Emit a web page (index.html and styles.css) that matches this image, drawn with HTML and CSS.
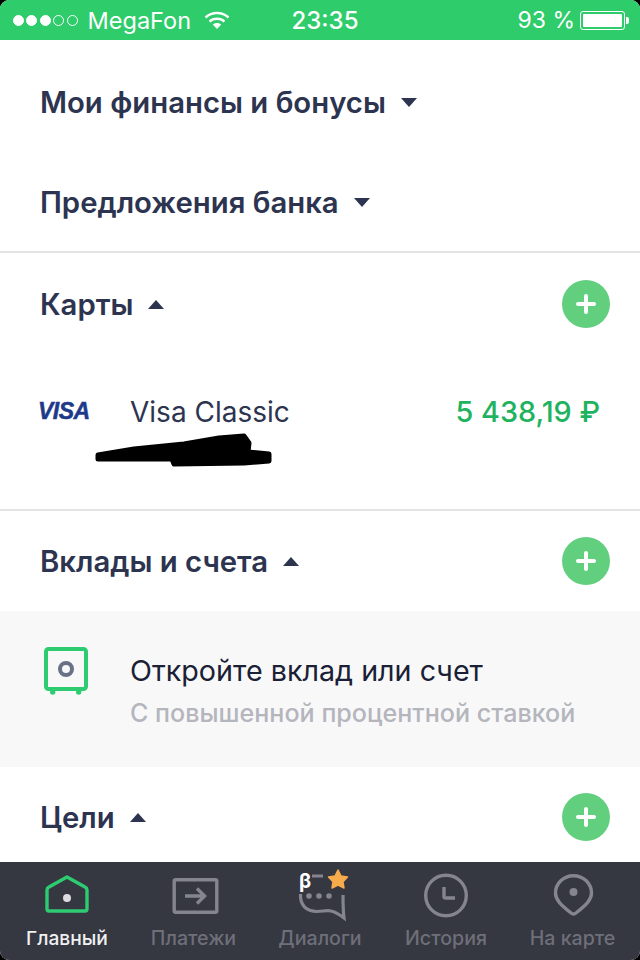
FILE: index.html
```html
<!DOCTYPE html>
<html>
<head>
<meta charset="utf-8">
<meta name="viewport" content="width=device-width, initial-scale=1">
<title>Главный</title>
<link rel="stylesheet" href="styles.css">
</head>
<body>
<div class="screen">

  <div class="statusbar">
    <div class="status-left">
      <span class="signal">
        <i class="dot on"></i><i class="dot on"></i><i class="dot on"></i><i class="dot"></i><i class="dot"></i>
      </span>
      <span class="carrier">MegaFon</span>
      <svg class="wifi" width="26" height="18" viewBox="0 0 26 18">
        <path d="M1.500 6.500C8 .5 18 .5 24.500 6.500" fill="none" stroke="#fff" stroke-width="2.400"/>
        <path d="M5.500 10.500C9.500 6.800 16.500 6.800 20.500 10.500" fill="none" stroke="#fff" stroke-width="2.400"/>
        <path d="M8.800 13.600C11 11.600 15 11.600 17.200 13.600L13 18Z" fill="#fff"/>
      </svg>
    </div>
    <div class="status-time">23:35</div>
    <div class="status-right">
      <span class="percent">93 %</span>
      <span class="battery"><span class="battery-fill"></span></span>
      <span class="battery-tip"></span>
    </div>
  </div>

  <div class="content">
    <div class="head-row first">
      <span class="title">Мои финансы и бонусы</span>
      <span class="arrow down"></span>
    </div>
    <div class="head-row second">
      <span class="title">Предложения банка</span>
      <span class="arrow down"></span>
    </div>

    <div class="section-head cards-head">
      <span class="title">Карты</span>
      <span class="arrow up"></span>
      <span class="add"></span>
    </div>
    <div class="card-row">
      <span class="visa">VISA</span>
      <span class="card-name">Visa Classic</span>
      <span class="card-sum">5 438,19 ₽</span>
      <svg class="scribble" width="180" height="40" viewBox="0 0 180 40">
        <path d="M4 24L40 18L90 13L125 7L150 5L155 12L154 21L175 23L175 30L150 32L80 33L78 28L4 28Z" fill="#000" stroke="#000" stroke-width="5" stroke-linejoin="round"/>
      </svg>
    </div>

    <div class="section-head deposits-head">
      <span class="title">Вклады и счета</span>
      <span class="arrow up"></span>
      <span class="add"></span>
    </div>
    <div class="promo">
      <svg class="safe" width="44" height="48" viewBox="0 0 44 48">
        <rect x="2" y="2" width="40" height="40" rx="2.500" fill="none" stroke="#2ecc71" stroke-width="4"/>
        <circle cx="8.700" cy="45" r="2.700" fill="#2ecc71"/>
        <circle cx="34.700" cy="45" r="2.700" fill="#2ecc71"/>
        <circle cx="22" cy="22" r="6" fill="none" stroke="#697186" stroke-width="4"/>
      </svg>
      <div class="promo-text">
        <div class="promo-title">Откройте вклад или счет</div>
        <div class="promo-sub">С повышенной процентной ставкой</div>
      </div>
    </div>

    <div class="section-head goals-head">
      <span class="title">Цели</span>
      <span class="arrow up"></span>
      <span class="add"></span>
    </div>
  </div>

  <div class="tabbar">
    <div class="tab active">
      <svg class="tab-icon" width="60" height="46" viewBox="0 0 60 46">
        <path d="M30 5L48 15Q50 16 50 18V37Q50 39 48 39H12Q10 39 10 37V18Q10 16 12 15Z" fill="none" stroke="#2ecc71" stroke-width="3.400" stroke-linejoin="round"/>
        <circle cx="30" cy="26" r="4" fill="#dcdce0"/>
      </svg>
      <span>Главный</span>
    </div>
    <div class="tab">
      <svg class="tab-icon" width="60" height="46" viewBox="0 0 60 46">
        <rect x="10.200" y="7.700" width="42.600" height="32.600" rx="1.500" fill="none" stroke="#85858f" stroke-width="3.400"/>
        <path d="M21 24H40M33 16.500L40.500 24L33 31.500" fill="none" stroke="#85858f" stroke-width="3.400"/>
      </svg>
      <span>Платежи</span>
    </div>
    <div class="tab">
      <svg class="tab-icon" width="60" height="46" viewBox="0 0 60 46">
        <path d="M22 4H33" fill="none" stroke="#85858f" stroke-width="3"/>
        <path d="M10.500 22C10 33 16 39.500 27 39.500C33 39.500 37 38 41 39C46 40 50 43 54 46C53 38 53 30 53 23" fill="none" stroke="#85858f" stroke-width="3.200"/>
        <circle cx="19" cy="24" r="2.800" fill="#85858f"/>
        <circle cx="29" cy="24" r="2.800" fill="#85858f"/>
        <circle cx="39" cy="24" r="2.800" fill="#85858f"/>
        <path d="M48 -2L51 4L57.500 5L53 9.800L54 16L48 13L42 16L43 9.800L38.500 5L45 4Z" fill="#f6ab4c" stroke="#f6ab4c" stroke-width="1.500" stroke-linejoin="round"/>
      </svg>
      <span class="beta">β</span>
      <span>Диалоги</span>
    </div>
    <div class="tab">
      <svg class="tab-icon" width="60" height="46" viewBox="0 0 60 46">
        <circle cx="30" cy="23.500" r="20.300" fill="none" stroke="#85858f" stroke-width="3.400"/>
        <path d="M28 15V24.500Q28 26 30 26H39" fill="none" stroke="#85858f" stroke-width="3.400"/>
      </svg>
      <span>История</span>
    </div>
    <div class="tab">
      <svg class="tab-icon" width="60" height="46" viewBox="0 0 60 46">
        <path d="M30.500 3.700C40.500 3.700 48.500 11.500 48.500 21C48.500 28 43 33 33 41Q30.500 43 28 41C18 33 12.500 28 12.500 21C12.500 11.500 20.500 3.700 30.500 3.700Z" fill="none" stroke="#85858f" stroke-width="3.400"/>
        <circle cx="30.500" cy="20" r="4" fill="#85858f"/>
      </svg>
      <span>На карте</span>
    </div>
  </div>

</div>
</body>
</html>
```

FILE: styles.css
```css
html, body {
  margin: 0;
  padding: 0;
  background: #000;
}

.screen {
  width: 640px;
  height: 960px;
  display: flex;
  flex-direction: column;
  overflow: hidden;
  border-radius: 9px;
  background: #fff;
  font-family: Inter, "Noto Sans", sans-serif;
}

/* status bar */
.statusbar {
  height: 40px;
  flex: none;
  display: grid;
  grid-template-columns: 1fr auto 1fr;
  align-items: center;
  padding: 0 11px 0 13px;
  background: #2ecc6a;
  color: #fff;
  font-size: 23.500px;
}

.status-left, .status-right {
  display: flex;
  align-items: center;
}

.status-right {
  justify-content: flex-end;
}

.signal {
  display: flex;
  gap: 2.400px;
  margin-right: 10px;
}

.dot {
  box-sizing: border-box;
  width: 11px;
  height: 11px;
  border: 1px solid #fff;
  border-radius: 50%;
}

.dot.on {
  background: #fff;
}

.wifi {
  margin-left: 13px;
}

.status-time {
  font-weight: 500;
  font-size: 24px;
  padding-left: 8px;
}

.percent {
  font-size: 23px;
  margin-right: 5px;
}

.battery {
  box-sizing: border-box;
  width: 45px;
  height: 19px;
  padding: 2px;
  border: 1px solid #fff;
  border-radius: 3px;
}

.battery-fill {
  display: block;
  height: 13px;
  border-radius: 1px;
  background: #fff;
}

.battery-tip {
  width: 3px;
  height: 7px;
  margin-left: 1px;
  background: #fff;
  border-radius: 0 2px 2px 0;
}

/* list */
.content {
  flex: 1;
  min-height: 0;
  overflow: hidden;
}

.head-row, .section-head {
  display: flex;
  align-items: center;
  padding: 0 40px;
}

.head-row.first {
  height: 124px;
}

.head-row.second {
  height: 76px;
  padding-bottom: 13px;
  margin-bottom: -2px;
}

.title {
  font-size: 29.300px;
  font-weight: 600;
  color: #2d3450;
}

.arrow {
  width: 0;
  height: 0;
  margin-left: 15px;
  border-left: 8px solid transparent;
  border-right: 8px solid transparent;
}

.arrow.down {
  border-top: 9px solid #2d3450;
}

.arrow.up {
  border-bottom: 9px solid #2d3450;
}

.add {
  position: relative;
  width: 48px;
  height: 48px;
  margin-left: auto;
  margin-right: -10px;
  border-radius: 50%;
  background: #62cf7f;
}

.add::before, .add::after {
  content: "";
  position: absolute;
  background: #fff;
  border-radius: 2px;
}

.add::before {
  left: 14px;
  top: 22px;
  width: 20px;
  height: 4px;
}

.add::after {
  left: 22px;
  top: 14px;
  width: 4px;
  height: 20px;
}

.cards-head {
  height: 102px;
  border-top: 2px solid #e4e4e6;
}

.deposits-head {
  height: 100px;
  border-top: 2px solid #e4e4e6;
}

.goals-head {
  height: 100px;
}

.card-row {
  position: relative;
  height: 154px;
  display: flex;
  align-items: flex-start;
  padding: 0 40px 0 38px;
}

.visa {
  width: 92px;
  margin-top: 43px;
  font-family: "Liberation Sans", sans-serif;
  font-size: 23px;
  line-height: 26px;
  font-weight: 700;
  font-style: italic;
  color: #1d3a8a;
  letter-spacing: -0.5px;
  -webkit-text-stroke: 0.5px #1d3a8a;
}

.card-name {
  margin-top: 39px;
  font-size: 28px;
  line-height: 36px;
  color: #2d3450;
}

.card-sum {
  margin-top: 39px;
  margin-left: auto;
  font-size: 28.800px;
  line-height: 36px;
  font-weight: 500;
  color: #1fb35f;
}

.scribble {
  position: absolute;
  left: 94px;
  top: 76px;
}

/* promo block */
.promo {
  height: 156px;
  display: flex;
  align-items: flex-start;
  background: #f8f8f8;
  padding-left: 44px;
}

.safe {
  margin-top: 36px;
}

.promo-text {
  margin-left: 42px;
  margin-top: 41px;
}

.promo-title {
  font-size: 28.700px;
  line-height: 38px;
  color: #1a2035;
}

.promo-sub {
  margin-top: 7px;
  font-size: 25.100px;
  line-height: 32px;
  font-weight: 500;
  color: #b4b5bd;
}

/* tab bar */
.tabbar {
  height: 98px;
  flex: none;
  display: grid;
  grid-template-columns: 134px 119px 134px 118px 135px;
  background: #353741;
}

.tab {
  position: relative;
  display: flex;
  flex-direction: column;
  align-items: center;
  padding-top: 10px;
  gap: 7px;
  font-size: 19.600px;
  font-weight: 500;
  line-height: 26px;
  color: #6e6f79;
}

.tab.active {
  color: #f0f0f2;
  font-size: 19.200px;
}

.tab-icon {
  overflow: visible;
}

.beta {
  position: absolute;
  left: 46px;
  top: 8px;
  font-size: 20px;
  line-height: 22px;
  font-weight: 700;
  color: #fff;
}
```
